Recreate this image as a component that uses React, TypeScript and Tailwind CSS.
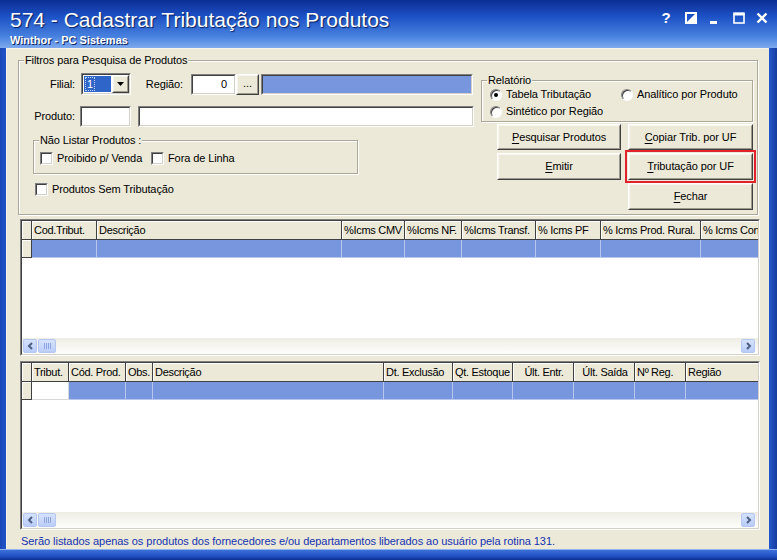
import type { ReactNode } from 'react'

type Col = { label: string; w: string; center?: boolean; white?: boolean }

const topCols: Col[] = [
  { label: 'Cod.Tribut.', w: 'w-[65px]' },
  { label: 'Descrição', w: 'w-[245px]' },
  { label: '%Icms CMV', w: 'w-[63px]' },
  { label: '%Icms NF.', w: 'w-[57px]' },
  { label: '%Icms Transf.', w: 'w-[74px]' },
  { label: '% Icms PF', w: 'w-[65px]' },
  { label: '% Icms Prod. Rural.', w: 'w-[100px]' },
  { label: '% Icms Cons. Final', w: 'w-[100px]' },
]

const bottomCols: Col[] = [
  { label: 'Tribut.', w: 'w-[37px]', white: true },
  { label: 'Cód. Prod.', w: 'w-[57px]' },
  { label: 'Obs.', w: 'w-[27px]' },
  { label: 'Descrição', w: 'w-[231px]' },
  { label: 'Dt. Exclusão', w: 'w-[69px]' },
  { label: 'Qt. Estoque', w: 'w-[60px]' },
  { label: 'Últ. Entr.', w: 'w-[61px]', center: true },
  { label: 'Últ. Saída', w: 'w-[61px]', center: true },
  { label: 'Nº Reg.', w: 'w-[51px]' },
  { label: 'Região', w: 'w-[80px]' },
]

function Sunken({ className = '', inner = 'bg-white', children }: { className?: string; inner?: string; children?: ReactNode }) {
  return (
    <div className={`shrink-0 border border-t-[#808080] border-l-[#808080] border-r-white border-b-white ${className}`}>
      <div className={`h-full w-full border border-t-[#404040] border-l-[#404040] border-r-[#d4d0c8] border-b-[#d4d0c8] ${inner}`}>
        {children}
      </div>
    </div>
  )
}

function Raised({ className = '', children }: { className?: string; children?: ReactNode }) {
  return (
    <div className={`shrink-0 border border-t-white border-l-white border-r-[#404040] border-b-[#404040] bg-[#ece9d8] ${className}`}>
      <div className="flex h-full w-full items-center justify-center border border-t-[#f7f5ee] border-l-[#f7f5ee] border-r-[#9d9a8c] border-b-[#9d9a8c]">
        {children}
      </div>
    </div>
  )
}

function Key({ k, rest }: { k: string; rest: string }) {
  return (
    <span>
      <span className="underline underline-offset-[2px]">{k}</span>
      {rest}
    </span>
  )
}

function Group({ label, className = '', children }: { label: string; className?: string; children?: ReactNode }) {
  return (
    <div className={`relative shrink-0 border border-[#aca899] shadow-[inset_1px_1px_0_#fff,1px_1px_0_#fff] ${className}`}>
      <span className="absolute -top-[7px] left-[5px] bg-[#ece9d8] px-[1px] leading-[13px]">{label}</span>
      {children}
    </div>
  )
}

function Check() {
  return <Sunken className="h-[13px] w-[13px]" />
}

function Radio({ on = false }: { on?: boolean }) {
  return (
    <span className="flex h-[12px] w-[12px] shrink-0 items-center justify-center rounded-full border border-t-[#808080] border-l-[#808080] border-r-white border-b-white bg-white shadow-[inset_1px_1px_0_#404040]">
      {on && <span className="h-[4px] w-[4px] rounded-full bg-black" />}
    </span>
  )
}

function ScrollBtn({ right = false }: { right?: boolean }) {
  return (
    <div className="my-[1px] flex w-[14px] items-center justify-center rounded-[2px] border border-[#b4c6f2] bg-[linear-gradient(180deg,#d6e2fd,#b9ccf8)]">
      <svg width="7" height="8" viewBox="0 0 7 8">
        <path d={right ? 'M2 1l3 3-3 3' : 'M5 1L2 4l3 3'} fill="none" stroke="#4d6185" strokeWidth="2" />
      </svg>
    </div>
  )
}

function HScroll() {
  return (
    <div className="flex h-[16px] shrink-0 bg-[linear-gradient(180deg,#eeede5,#fefefb)] pl-[1px] pr-[3px]">
      <ScrollBtn />
      <div className="my-[1px] ml-[1px] flex w-[18px] items-center justify-center gap-[1px] rounded-[2px] border border-[#b4c6f2] bg-[linear-gradient(180deg,#d6e2fd,#bccef8)]">
        <span className="h-[6px] w-[1px] bg-[#8ea5e4]" />
        <span className="h-[6px] w-[1px] bg-[#8ea5e4]" />
        <span className="h-[6px] w-[1px] bg-[#8ea5e4]" />
        <span className="h-[6px] w-[1px] bg-[#8ea5e4]" />
      </div>
      <div className="flex-1" />
      <ScrollBtn right />
    </div>
  )
}

function DataGrid({ cols, className = '' }: { cols: Col[]; className?: string }) {
  return (
    <Sunken className={`ml-[13px] w-[740px] ${className}`} inner="flex flex-col bg-white overflow-hidden">
      <div className="flex h-[19px] shrink-0 overflow-hidden bg-[#ece9d8] tracking-[-0.3px]">
        <div className="w-[10px] shrink-0 border-r border-b border-[#404040] shadow-[inset_1px_1px_0_#fff]" />
        {cols.map((c) => (
          <div
            key={c.label}
            className={`${c.w} shrink-0 overflow-hidden whitespace-nowrap border-r border-b border-[#404040] pl-[2px] leading-[18px] shadow-[inset_1px_1px_0_#fff] ${c.center ? 'text-center' : ''}`}
          >
            {c.label}
          </div>
        ))}
      </div>
      <div className="flex h-[18px] shrink-0 overflow-hidden">
        <div className="w-[10px] shrink-0 border-r border-b border-[#404040] bg-[#ece9d8] shadow-[inset_1px_1px_0_#fff]" />
        {cols.map((c) => (
          <div
            key={c.label}
            className={`${c.w} shrink-0 border-r border-b ${c.white ? 'border-[#d8d8d8] bg-white' : 'border-[#b7c6ee] bg-[#7896de]'}`}
          />
        ))}
      </div>
      <div className="flex-1" />
      <HScroll />
    </Sunken>
  )
}

function Cap({ children }: { children: ReactNode }) {
  return <span className="whitespace-nowrap leading-[13px]">{children}</span>
}

export default function App() {
  return (
    <div className="flex h-[560px] w-[777px] flex-col overflow-hidden bg-[linear-gradient(90deg,#1a47b8,#2457cc_1%,#2457cc_99%,#163c9e)] font-['Liberation_Sans',Arial,sans-serif] text-[11px] tracking-[-0.1px] text-black">
      {/* title bar */}
      <div className="flex h-[48px] shrink-0 bg-[linear-gradient(180deg,#0c2d94_0%,#1d52c6_35%,#4680de_75%,#7eaaee_100%)] tracking-normal text-white">
        <div className="pl-[10px]">
          <div className="pt-[8px] text-[21px] leading-[24px] [text-shadow:1px_1px_1px_#0a2060]">
            574 - Cadastrar Tributação nos Produtos
          </div>
          <div className="mt-[2px] text-[11px] font-bold leading-[13px] [text-shadow:1px_1px_0_#10255f]">
            Winthor - PC Sistemas
          </div>
        </div>
        <div className="ml-auto flex items-start pr-[9px] pt-[9px]">
          <span className="w-[12px] text-center text-[15px] font-bold leading-[17px]">?</span>
          <svg className="ml-[13px] mt-[3px]" width="12" height="12" viewBox="0 0 12 12">
            <rect x="1" y="1" width="10" height="10" fill="none" stroke="#fff" strokeWidth="2" />
            <path d="M1 11L11 1V11Z" fill="#fff" />
          </svg>
          <svg className="ml-[11px] mt-[3px]" width="12" height="12" viewBox="0 0 12 12">
            <rect x="2" y="9" width="7" height="3" fill="#fff" />
          </svg>
          <svg className="ml-[13px] mt-[3px]" width="12" height="12" viewBox="0 0 12 12">
            <rect x="1" y="1.5" width="10" height="9.5" fill="none" stroke="#fff" strokeWidth="1.6" />
            <rect x="0.5" y="0.5" width="11" height="3" fill="#fff" />
          </svg>
          <svg className="ml-[11px] mt-[3px]" width="12" height="12" viewBox="0 0 12 12">
            <path d="M1.5 1.5l9 9M10.5 1.5l-9 9" stroke="#fff" strokeWidth="2.4" />
          </svg>
        </div>
      </div>

      {/* client area */}
      <div className="ml-[6px] flex h-[501px] w-[763px] shrink-0 flex-col border-t border-l border-[#f5f3ea] bg-[#ece9d8]">
        <Group label="Filtros para Pesquisa de Produtos" className="ml-[11px] mt-[11px] flex h-[155px] w-[740px]">
          {/* left side */}
          <div className="flex w-[456px] shrink-0 flex-col">
            <div className="mt-[12px] flex h-[22px] items-center">
              <span className="w-[56px] text-right">Filial:</span>
              <Sunken className="ml-[6px] h-[22px] w-[50px]" inner="flex bg-white">
                <div className="m-[1px] flex flex-1 items-center bg-[#2f64c8] pl-[1px] text-white">
                  <span className="border border-dotted border-[#c9d6f2] px-[1px] leading-[12px]">1</span>
                </div>
                <Raised className="w-[17px]">
                  <svg width="7" height="4" viewBox="0 0 7 4">
                    <path d="M0 0h7L3.5 4z" fill="#000" />
                  </svg>
                </Raised>
              </Sunken>
              <span className="w-[52px] text-right">Região:</span>
              <Sunken className="ml-[8px] h-[21px] w-[45px]" inner="flex items-center justify-end bg-white pr-[7px]">
                0
              </Sunken>
              <Raised className="h-[21px] w-[23px]">
                <span className="-mt-[2px]">...</span>
              </Raised>
              <Sunken className="ml-[2px] h-[21px] w-[212px]" inner="bg-[#7896de]" />
            </div>
            <div className="mt-[11px] flex h-[21px] items-center">
              <span className="w-[56px] text-right">Produto:</span>
              <Sunken className="ml-[5px] h-[21px] w-[51px]" />
              <Sunken className="ml-[7px] h-[21px] w-[336px]" />
            </div>
            <Group label="Não Listar Produtos :" className="ml-[14px] mt-[13px] h-[34px] w-[325px]">
              <div className="flex items-center pl-[6px] pt-[11px]">
                <div className="flex w-[111px] items-center gap-[4px]">
                  <Check />
                  <Cap>Proibido p/ Venda</Cap>
                </div>
                <div className="flex items-center gap-[4px]">
                  <Check />
                  <Cap>Fora de Linha</Cap>
                </div>
              </div>
            </Group>
            <div className="ml-[16px] mt-[9px] flex items-center gap-[4px]">
              <Check />
              <Cap>Produtos Sem Tributação</Cap>
            </div>
          </div>

          {/* right side */}
          <div className="flex flex-col">
            <Group label="Relatório" className="ml-[6px] mt-[19px] h-[42px] w-[272px]">
              <div className="flex flex-col pl-[8px] pt-[7px]">
                <div className="flex items-center">
                  <div className="flex w-[131px] items-center gap-[4px]">
                    <Radio on />
                    <Cap>Tabela Tributação</Cap>
                  </div>
                  <div className="flex items-center gap-[4px]">
                    <Radio />
                    <Cap>Analítico por Produto</Cap>
                  </div>
                </div>
                <div className="mt-[4px] flex items-center gap-[4px]">
                  <Radio />
                  <Cap>Sintético por Região</Cap>
                </div>
              </div>
            </Group>
            <div className="ml-[22px] mt-[2px] grid grid-cols-[124px_125px] grid-rows-[26px_27px_27px] gap-x-[7px] gap-y-[3px]">
              <Raised>
                <Key k="P" rest="esquisar Produtos" />
              </Raised>
              <Raised>
                <Key k="C" rest="opiar Trib. por UF" />
              </Raised>
              <Raised>
                <Key k="E" rest="mitir" />
              </Raised>
              <Raised className="outline-2 outline-offset-[1px] outline-[#e3212b]">
                <Key k="T" rest="ributação por UF" />
              </Raised>
              <div />
              <Raised>
                <Key k="F" rest="echar" />
              </Raised>
            </div>
          </div>
        </Group>

        <DataGrid cols={topCols} className="mt-[4px] h-[137px]" />
        <DataGrid cols={bottomCols} className="mt-[5px] h-[169px]" />

        <div className="ml-[14px] mt-[5px] whitespace-nowrap leading-[13px] tracking-[-0.05px] text-[#1432b0]">
          Serão listados apenas os produtos dos fornecedores e/ou departamentos liberados ao usuário pela rotina 131.
        </div>
      </div>

      {/* bottom frame */}
      <div className="flex-1 border-t border-[#8fb4f2] bg-[linear-gradient(180deg,#3d6fd8,#2052c6_60%,#0d2f92)]" />
    </div>
  )
}
